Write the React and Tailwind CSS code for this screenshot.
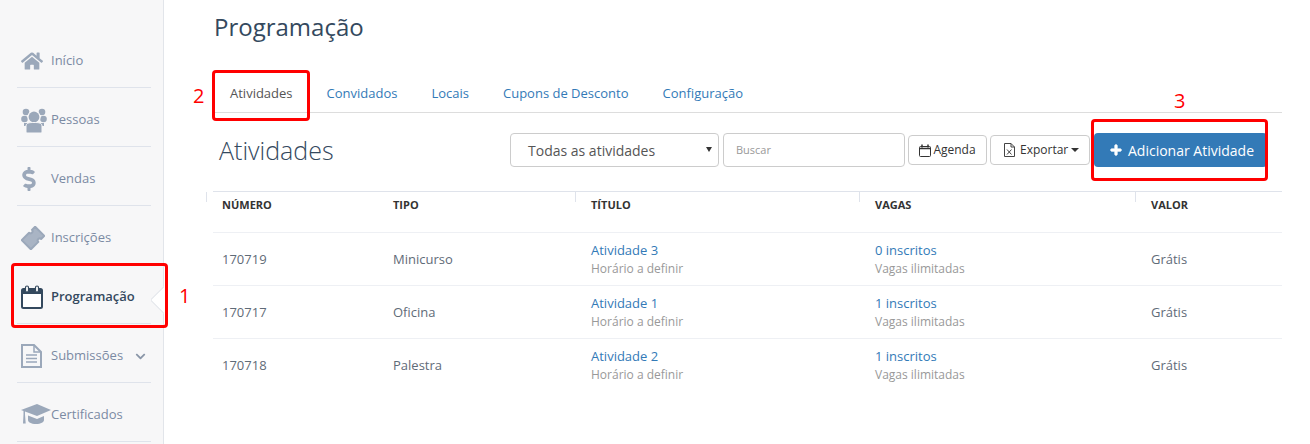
import { FaHome, FaDollarSign, FaChevronDown, FaPlus } from 'react-icons/fa'

function CalendarIcon() {
  return (
    <svg width="22" height="24" viewBox="0 0 22 24" fill="none">
      <rect x="1" y="4" width="20" height="19" rx="1.5" fill="#fff" stroke="#34495e" strokeWidth="2" />
      <rect x="1" y="4" width="20" height="5" fill="#34495e" />
      <rect x="4.5" y="1" width="3" height="6" rx="1.5" fill="#fff" stroke="#34495e" strokeWidth="1.2" />
      <rect x="14.5" y="1" width="3" height="6" rx="1.5" fill="#fff" stroke="#34495e" strokeWidth="1.2" />
    </svg>
  )
}

function PeopleIcon() {
  return (
    <svg width="26" height="26" viewBox="0 0 26 26" fill="#9ba8ba">
      <circle cx="5" cy="5" r="3.3" />
      <circle cx="21" cy="5" r="3.3" />
      <circle cx="3.5" cy="12" r="3.3" />
      <circle cx="22.5" cy="12" r="3.3" />
      <path d="M3 16h20v3h-4v5H7v-5H3z" />
      <circle cx="13" cy="10" r="6.6" fill="#f7f7f8" />
      <circle cx="13" cy="10" r="5.4" />
      <path d="M5 25v-6c0-3 3-3.500 8-3.500s8 .5 8 3.500v6a1 1 0 0 1-1 1H6a1 1 0 0 1-1-1z" stroke="#f7f7f8" />
    </svg>
  )
}

function TicketIcon() {
  return (
    <svg width="24" height="24" viewBox="0 0 24 24">
      <g transform="rotate(-45 12 12)">
        <path
          d="M2.500 5.500h10.500a2 2 0 0 0 4 0h4.500v13h-4.500a2 2 0 0 0-4 0H2.500z"
          fill="#a9b4c4"
          stroke="#9ba8ba"
          strokeWidth="2"
          strokeLinejoin="round"
        />
      </g>
    </svg>
  )
}

function FileIcon() {
  return (
    <svg width="21" height="24" viewBox="0 0 21 24" fill="none" stroke="#9ba8ba">
      <path d="M1 1h12l7 7v15H1z" strokeWidth="2" />
      <path d="M13 1v7h7" strokeWidth="1.5" />
      <path d="M5 11h11M5 14.500h11M5 18h11" strokeWidth="1.500" />
    </svg>
  )
}

function CapIcon() {
  return (
    <svg width="30" height="22" viewBox="0 0 30 22" fill="#9ba8ba">
      <path d="M0 6 16 0l14 6-14 6z" />
      <path d="M7 11.500 16 15l7-3v4c0 2-3 4-8 4s-8-2-8-4z" />
      <path d="M2.500 6.500h1.500v4l.7 9H2l.5-9z" />
    </svg>
  )
}

function SmallCalendarIcon() {
  return (
    <svg width="12" height="13" viewBox="0 0 12 13" fill="none" stroke="#333">
      <rect x="0.5" y="2.500" width="11" height="10" rx="1" />
      <path d="M0.500 4.500h11" strokeWidth="1.500" />
      <path d="M3 0.500v3M9 0.500v3" strokeWidth="1.500" />
    </svg>
  )
}

function ExcelIcon() {
  return (
    <svg width="11" height="14" viewBox="0 0 11 14" fill="none" stroke="#444">
      <path d="M0.500 0.500h6.500l3.500 3.500v9.500h-10z" />
      <path d="M7 0.500v3.500h3.500" />
      <path d="M3 6.500l4.500 5M7.500 6.500l-4.500 5" />
    </svg>
  )
}

const menuItems = [
  { label: 'Início', icon: <FaHome size={22} /> },
  { label: 'Pessoas', icon: <PeopleIcon /> },
  { label: 'Vendas', icon: <FaDollarSign size={24} className="-ml-1" /> },
  { label: 'Inscrições', icon: <TicketIcon /> },
  { label: 'Programação', icon: <CalendarIcon />, active: true },
  { label: 'Submissões', icon: <FileIcon />, arrow: true },
  { label: 'Certificados', icon: <CapIcon /> },
]

const columns = 'grid grid-cols-[171px_198px_284px_276px_1fr] pl-[9px]'

const rows = [
  { id: '170719', type: 'Minicurso', title: 'Atividade 3', enrolled: '0 inscritos' },
  { id: '170717', type: 'Oficina', title: 'Atividade 1', enrolled: '1 inscritos' },
  { id: '170718', type: 'Palestra', title: 'Atividade 2', enrolled: '1 inscritos' },
]

const tabs = ['Convidados', 'Locais', 'Cupons de Desconto', 'Configuração']

function Sidebar() {
  return (
    <aside className="relative w-[164px] shrink-0 border-r border-[#e2e5ea] bg-[#f7f7f8] pt-[29px]">
      {menuItems.map((item) => (
        <div
          key={item.label}
          className={`mx-[17px] flex h-[59px] w-[134px] items-center border-b border-[#dfe3eb] pt-[6px] ${
            item.active ? 'font-semibold text-[#34495e]' : 'text-[#7b8aa3]'
          }`}
        >
          <span className={`flex w-[34px] shrink-0 pl-[4px] ${item.active ? '' : 'text-[#9ba8ba]'}`}>{item.icon}</span>
          <span className="text-[13px]">{item.label}</span>
          {item.arrow && <FaChevronDown size={11} className="ml-[12px] text-[#8a96a8]" />}
        </div>
      ))}
      <div className="absolute right-[-1px] top-[286px] h-[28px] w-[13px] overflow-hidden">
        <div className="ml-[3px] mt-[4px] h-[20px] w-[20px] rotate-45 border border-[#e2e5ea] bg-white" />
      </div>
    </aside>
  )
}

function Toolbar() {
  return (
    <div className="mt-[20px] flex h-[34px] items-center pl-[6px]">
      <h2 className="pt-[2px] text-[25px] font-light text-[#34495e]">Atividades</h2>
      <div className="ml-auto flex items-center">
        <div className="relative flex h-[34px] w-[209px] items-center rounded border border-[#ccc] pl-[17px] text-[14px] text-[#555]">
          Todas as atividades
          <span className="absolute right-[6px] top-[13px] h-0 w-0 border-x-[3.5px] border-t-[5px] border-x-transparent border-t-[#333]" />
        </div>
        <div className="ml-[4px] flex h-[34px] w-[182px] items-center rounded border border-[#ccc] pl-[12px] text-[11px] text-[#999]">
          Buscar
        </div>
        <button type="button" className="ml-[3px] flex h-[30px] w-[79px] items-center justify-center gap-[2px] rounded border border-[#ccc] text-[12px] text-[#333]">
          <SmallCalendarIcon />
          Agenda
        </button>
        <button type="button" className="ml-[3px] flex h-[30px] w-[100px] items-center gap-[5px] rounded border border-[#ccc] pl-[13px] text-[12px] text-[#333]">
          <ExcelIcon />
          <span className="flex items-center gap-[3px]">
            Exportar
            <span className="h-0 w-0 border-x-[4px] border-t-[4px] border-x-transparent border-t-[#333]" />
          </span>
        </button>
        <button type="button" className="ml-[4px] mr-[15px] flex h-[34px] w-[173px] items-center gap-[6px] rounded-sm bg-[#337ab7] pl-[16px] text-[14px] text-white">
          <FaPlus size={12} stroke="currentColor" strokeWidth={40} />
          Adicionar Atividade
        </button>
      </div>
    </div>
  )
}

function ActivityTable() {
  return (
    <div className="relative mt-[24px] border-t border-[#dfe3eb]">
      {[-7, 362, 646, 922].map((left) => (
        <span key={left} style={{ left }} className="absolute top-0 h-[10px] w-px bg-[#dfe3eb]" />
      ))}
      <div className={`${columns} h-[41px] border-b border-[#eef0f4] pt-[5px] text-[11px] font-bold text-[#333]`}>
        <span>NÚMERO</span>
        <span>TIPO</span>
        <span>TÍTULO</span>
        <span>VAGAS</span>
        <span>VALOR</span>
      </div>
      {rows.map((row) => (
        <div key={row.id} className={`${columns} h-[53px] items-center border-b border-[#eef0f4] text-[13px] text-[#5f6b78] last:border-transparent`}>
          <span className="pt-[2px]">{row.id}</span>
          <span className="pt-[2px]">{row.type}</span>
          <div className="flex flex-col pt-[1px] leading-[18px]">
            <a className="text-[#337ab7]">{row.title}</a>
            <span className="mt-[1px] text-[12px] text-[#999]">Horário a definir</span>
          </div>
          <div className="flex flex-col pt-[1px] leading-[18px]">
            <a className="text-[#337ab7]">{row.enrolled}</a>
            <span className="mt-[1px] text-[12px] text-[#999]">Vagas ilimitadas</span>
          </div>
          <span className="pt-[2px]">Grátis</span>
        </div>
      ))}
    </div>
  )
}

export default function App() {
  return (
    <div className="relative flex h-[444px] overflow-hidden bg-white font-['Open_Sans',sans-serif]">
      <Sidebar />
      <main className="ml-[49px] mr-[28px] flex-1 pt-[11px]">
        <h1 className="pl-[1px] text-[24px] leading-[32px] text-[#34495e]">Programação</h1>
        <nav className="mt-[31px] flex h-[39px] items-center border-b border-[#ddd] pt-[2px] text-[13px] text-[#337ab7]">
          <span className="pl-[17px] pr-[34px] text-[#555]">Atividades</span>
          {tabs.map((tab) => (
            <span key={tab} className="mr-[34px]">{tab}</span>
          ))}
        </nav>
        <Toolbar />
        <ActivityTable />
      </main>

      {/* anotacoes em vermelho por cima da tela */}
      <div className="absolute left-[11px] top-[263px] h-[65px] w-[157px] rounded-sm border-[3px] border-[#f00]" />
      <div className="absolute left-[212px] top-[70px] h-[51px] w-[98px] rounded-sm border-[3px] border-[#f00]" />
      <div className="absolute left-[1091px] top-[119px] h-[62px] w-[177px] rounded-sm border-[3px] border-[#f00]" />
      <span className="absolute left-[179px] top-[282px] text-[20px] leading-[28px] text-[#f00]">1</span>
      <span className="absolute left-[193px] top-[82px] text-[20px] leading-[28px] text-[#f00]">2</span>
      <span className="absolute left-[1174px] top-[87px] text-[20px] leading-[28px] text-[#f00]">3</span>
    </div>
  )
}
